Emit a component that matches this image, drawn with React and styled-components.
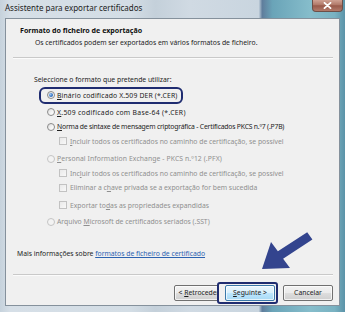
import React from "react";
import styled, { createGlobalStyle } from "styled-components";

const Global = createGlobalStyle`
  html, body { margin: 0; padding: 0; background: #ffffff; }
  body { font-family: "Noto Sans", "DejaVu Sans", sans-serif; }
`;

const Window = styled.div`
  position: relative;
  width: 345px;
  height: 312px;
  display: flex;
  flex-direction: column;
  overflow: hidden;
  background: linear-gradient(
    90deg,
    #c6d2dc 0%,
    #d6dfe7 3%,
    #d3dde5 38%,
    #c4d0da 45%,
    #d0dae3 55%,
    #c9d5df 75%,
    #5f7d9c 76%,
    #6aa4b8 79%,
    #86bdcb 90%,
    #79b2c2 97%,
    #5b93a8 100%
  );
`;

const TitleBar = styled.div`
  height: 18px;
  flex: none;
  display: flex;
  align-items: flex-start;
  padding-left: 5px;
`;

const Title = styled.span`
  margin-top: 3px;
  font-size: 8px;
  line-height: 10px;
  color: #1c1c1c;
  white-space: nowrap;
`;

const CloseButton = styled.div`
  margin-left: auto;
  margin-right: 2px;
  width: 31px;
  height: 12px;
  box-sizing: border-box;
  border: 1px solid #6d4f48;
  border-top: none;
  border-radius: 0 0 4px 4px;
  background: linear-gradient(180deg, #cfa193 0%, #b07868 45%, #98594a 52%, #b27b6b 100%);
  display: flex;
  align-items: center;
  justify-content: center;
`;

const Client = styled.div`
  flex: 1;
  margin: 0 5px 6px 5px;
  border: 1px solid #85919c;
  background: #f0f0f0;
  display: flex;
  flex-direction: column;
  color: #222;
  font-size: 6.8px;
`;

const Header = styled.div`
  padding: 7px 0 0 14px;
`;

const HeaderTitle = styled.div`
  font-weight: 700;
  font-size: 7.1px;
  line-height: 9px;
  color: #111;
  white-space: nowrap;
`;

const HeaderSub = styled.div`
  margin: 2.5px 0 0 15px;
  line-height: 9px;
  white-space: nowrap;
`;

const Separator = styled.div`
  margin: ${(p) => p.$top}px 6px 0 7px;
  height: 0;
  border-top: 1px solid #c9c9c9;
  border-bottom: 1px solid #fbfbfb;
`;

const Body = styled.div`
  padding-left: 28px;
`;

const Prompt = styled.div`
  margin-top: 15.5px;
  line-height: 9px;
  white-space: nowrap;
`;

const Options = styled.div`
  margin-top: 4.7px;
  padding-left: 13px;
  display: flex;
  flex-direction: column;
  align-items: flex-start;
`;

const Row = styled.div`
  position: relative;
  height: 14.5px;
  margin-top: ${(p) => p.$space || 0}px;
  margin-left: ${(p) => (p.$sub ? 12 : 0)}px;
  display: flex;
  align-items: center;
  gap: ${(p) => (p.$sub ? 3 : 2)}px;
  white-space: nowrap;
  letter-spacing: ${(p) => p.$track || 0}px;
  color: ${(p) => (p.$disabled ? "#8f8f8f" : "#222")};

  ${(p) =>
    p.$highlight &&
    `
    &::after {
      content: "";
      position: absolute;
      left: -8px;
      right: -5px;
      top: -1px;
      bottom: -1px;
      border: 2px solid #1f2c70;
      border-radius: 6px;
    }
  `}
`;

const Radio = styled.span`
  position: relative;
  width: 8px;
  height: 8px;
  box-sizing: border-box;
  border-radius: 50%;
  flex: none;
  border: 1px solid ${(p) => (p.$disabled ? "#c4c4c4" : "#8a8a8a")};
  background: ${(p) =>
    p.$disabled
      ? "#f3f3f3"
      : "linear-gradient(135deg, #dcdcdc 0%, #f6f6f6 60%, #ffffff 100%)"};

  ${(p) =>
    p.$checked &&
    `
    &::after {
      content: "";
      position: absolute;
      left: 1px;
      top: 1px;
      width: 4px;
      height: 4px;
      border-radius: 50%;
      background: radial-gradient(circle at 35% 35%, #9cc6f2 0%, #3a78c6 55%, #1d4f99 100%);
    }
  `}
`;

const Check = styled.span`
  width: 8px;
  height: 8px;
  box-sizing: border-box;
  flex: none;
  border: 1px solid #c2c2c2;
  background: linear-gradient(135deg, #e9e9e9 0%, #f8f8f8 100%);
`;

const Key = styled.span`
  text-decoration: underline;
`;

const MoreInfo = styled.div`
  margin-top: 20px;
  padding-left: 11px;
  line-height: 9px;
  white-space: nowrap;
`;

const Link = styled.span`
  color: #2c62b0;
  text-decoration: underline;
`;

const Footer = styled.div`
  margin-top: 6px;
  padding-right: 6px;
  display: flex;
  justify-content: flex-end;
  align-items: center;
`;

const Button = styled.div`
  width: 50px;
  height: 16px;
  box-sizing: border-box;
  border: 1px solid ${(p) => (p.$default ? "#3a78a8" : "#707070")};
  border-radius: 2px;
  background: ${(p) =>
    p.$default
      ? "linear-gradient(180deg, #eaf6fd 0%, #d9f0fc 48%, #bee6fd 52%, #a7d9f5 100%)"
      : "linear-gradient(180deg, #f2f2f2 0%, #ebebeb 48%, #dddddd 52%, #cfcfcf 100%)"};
  box-shadow: inset 0 0 0 1px rgba(255, 255, 255, 0.7);
  display: flex;
  align-items: center;
  justify-content: center;
  font-size: 6.8px;
  color: #1b1b1b;
  white-space: pre;
  overflow: hidden;
  margin-left: ${(p) => p.$ml || 0}px;
`;

const FocusRing = styled.div`
  position: relative;
  z-index: 1;
  margin-left: -7px;
  padding: 1px 1px 1px 6px;
  border: 2px solid #1f2c70;
  border-radius: 3px;
  background: #f0f0f0;
  display: flex;
`;

const Annotation = styled.svg`
  position: absolute;
  left: 0;
  top: 0;
  pointer-events: none;
`;

export default function App() {
  return (
    <>
      <Global />
      <Window>
        <TitleBar>
          <Title>Assistente para exportar certificados</Title>
          <CloseButton>
            <svg width="9" height="7" viewBox="0 0 9 7">
              <path d="M1.5 0.8 L7.5 6.2 M7.5 0.8 L1.5 6.2" stroke="#ffffff" strokeWidth="1.8" strokeLinecap="round" />
            </svg>
          </CloseButton>
        </TitleBar>
        <Client>
          <Header>
            <HeaderTitle>Formato do ficheiro de exportação</HeaderTitle>
            <HeaderSub>Os certificados podem ser exportados em vários formatos de ficheiro.</HeaderSub>
          </Header>
          <Separator $top={10.5} />
          <Body>
            <Prompt>Seleccione o formato que pretende utilizar:</Prompt>
            <Options>
              <Row $highlight $track={0.16}>
                <Radio $checked />
                <span>
                  <Key>B</Key>inário codificado X.509 DER (*.CER)
                </span>
              </Row>
              <Row $space={2.5} $track={0.3}>
                <Radio />
                <span>
                  <Key>X</Key>.509 codificado com Base-64 (*.CER)
                </span>
              </Row>
              <Row $track={-0.2}>
                <Radio />
                <span>
                  <Key>N</Key>orma de sintaxe de mensagem criptográfica - Certificados PKCS n.º7 (.P7B)
                </span>
              </Row>
              <Row $sub $disabled>
                <Check />
                <span>
                  <Key>I</Key>ncluir todos os certificados no caminho de certificação, se possível
                </span>
              </Row>
              <Row $space={2.8} $disabled $track={0.1}>
                <Radio $disabled />
                <span>
                  <Key>P</Key>ersonal Information Exchange - PKCS n.º12 (.PFX)
                </span>
              </Row>
              <Row $sub $disabled>
                <Check />
                <span>
                  Inc<Key>l</Key>uir todos os certificados no caminho de certificação, se possível
                </span>
              </Row>
              <Row $sub $disabled>
                <Check />
                <span>
                  Eliminar a c<Key>h</Key>ave privada se a exportação for bem sucedida
                </span>
              </Row>
              <Row $sub $disabled $space={2.8}>
                <Check />
                <span>
                  Exportar to<Key>d</Key>as as propriedades expandidas
                </span>
              </Row>
              <Row $disabled $space={2.2}>
                <Radio $disabled />
                <span>
                  Arquivo <Key>M</Key>icrosoft de certificados seriados (.SST)
                </span>
              </Row>
            </Options>
          </Body>
          <MoreInfo>
            Mais informações sobre <Link>formatos de ficheiro de certificado</Link>
          </MoreInfo>
          <Separator $top={16} />
          <Footer>
            <Button>
              {"< "}
              <Key>R</Key>etroceder
            </Button>
            <FocusRing>
              <Button $default>
                <Key>S</Key>eguinte {">"}
              </Button>
            </FocusRing>
            <Button $ml={5}>Cancelar</Button>
          </Footer>
        </Client>
        <Annotation width="345" height="312" viewBox="0 0 345 312">
          <polygon
            points="262,269 271,242 277.9,251.3 307.2,232.2 312.4,239.6 283.1,258.7 290,268"
            fill="#33448e"
          />
        </Annotation>
      </Window>
    </>
  );
}
